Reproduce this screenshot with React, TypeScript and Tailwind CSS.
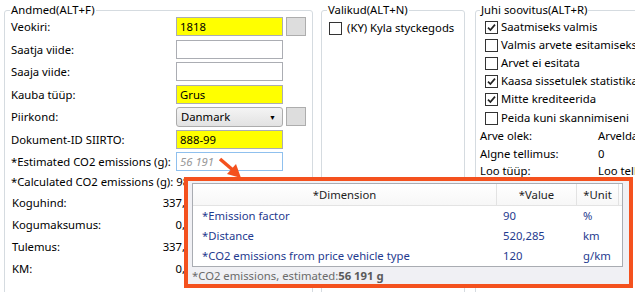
import type { ReactNode } from 'react'

const font = "font-['Noto_Sans',sans-serif]"

function Check({ checked }: { checked?: boolean }) {
  return (
    <span className="w-[13px] h-[13px] shrink-0 border border-[#333] bg-white flex items-center justify-center">
      {checked && (
        <svg width="9" height="9" viewBox="0 0 9 9">
          <path d="M1 4.6 L3.4 7 L8 1.6" fill="none" stroke="#222" strokeWidth="1.7" />
        </svg>
      )}
    </span>
  )
}

function Row({ label, children }: { label: string; children?: ReactNode }) {
  return (
    <div className="flex items-start h-[22.5px]">
      <span className="w-[165px] leading-[19px] whitespace-nowrap">{label}</span>
      {children}
    </div>
  )
}

function Field({ value, yellow }: { value?: string; yellow?: boolean }) {
  return (
    <div
      className={
        'w-[107px] h-[19px] border border-[#abadb3] px-[3px] leading-[17px] ' +
        (yellow ? 'bg-[#ffff00]' : 'bg-white')
      }
    >
      {value}
    </div>
  )
}

function GrayBtn() {
  return <div className="w-[20px] h-[19px] ml-[3px] bg-[#dddddd] border border-[#adadad]" />
}

const totals = [
  { label: 'Koguhind:', value: '337,50' },
  { label: 'Kogumaksumus:', value: '0,00' },
  { label: 'Tulemus:', value: '337,50' },
  { label: 'KM:', value: '0,00' },
]

const flags = [
  { label: 'Saatmiseks valmis', checked: true },
  { label: 'Valmis arvete esitamiseks/kinnitamiseks', checked: false },
  { label: 'Arvet ei esitata', checked: false },
  { label: 'Kaasa sissetulek statistikasse', checked: true },
  { label: 'Mitte krediteerida', checked: true },
  { label: 'Peida kuni skannimiseni', checked: false },
]

const info = [
  { label: 'Arve olek:', value: 'Arveldamata' },
  { label: 'Algne tellimus:', value: '0' },
  { label: 'Loo tüüp:', value: 'Loo tellimus' },
]

const dims = [
  { name: '*Emission factor', value: '90', unit: '%' },
  { name: '*Distance', value: '520,285', unit: 'km' },
  { name: '*CO2 emissions from price vehicle type', value: '120', unit: 'g/km' },
]

export default function App() {
  return (
    <div className={`relative w-[635px] h-[292px] overflow-hidden bg-white text-[11.3px] text-black ${font}`}>
      <div className="flex pl-[4px]">
        {/* Andmed */}
        <fieldset className="mt-[2px] w-[309px] h-[330px] shrink-0 border border-[#d5dbe0] rounded-[3px] px-[6px]">
          <legend className="ml-[-1px] px-[1px] leading-[16px]">Andmed(ALT+F)</legend>
          <div className="-mt-[1px]">
            <Row label="Veokiri:">
              <Field value="1818" yellow />
              <GrayBtn />
            </Row>
            <Row label="Saatja viide:">
              <Field />
            </Row>
            <Row label="Saaja viide:">
              <Field />
            </Row>
            <Row label="Kauba tüüp:">
              <Field value="Grus" yellow />
            </Row>
            <Row label="Piirkond:">
              <div className="w-[107px] h-[20px] rounded-[3px] border border-[#acacac] bg-gradient-to-b from-[#f4f4f4] to-[#e2e2e2] pl-[4px] pr-[6px] flex items-center justify-between">
                <span>Danmark</span>
                <span className="text-[7px] leading-none">▼</span>
              </div>
              <GrayBtn />
            </Row>
            <Row label="Dokument-ID SIIRTO:">
              <Field value="888-99" yellow />
            </Row>
            <div className="flex items-start h-[20px]">
              <span className="w-[165px] leading-[19px] whitespace-nowrap">*Estimated CO2 emissions (g):</span>
              <div className="w-[107px] h-[19px] border border-[#8fc0ee] px-[3px] leading-[17px] italic text-[#999]">
                56 191
              </div>
            </div>
            <div className="h-[20px] leading-[20px] whitespace-nowrap">*Calculated CO2 emissions (g): 98 991</div>
            {totals.map((t) => (
              <div key={t.label} className="flex h-[22px] leading-[22px] pl-[1px]">
                <span className="w-[140px]">{t.label}</span>
                <span className="w-[46px] text-right">{t.value}</span>
              </div>
            ))}
          </div>
        </fieldset>

        {/* Valikud */}
        <fieldset className="mt-[2px] ml-[8px] w-[144px] h-[330px] shrink-0 border border-[#d5dbe0] rounded-[3px] pl-[7px]">
          <legend className="ml-[-2px] px-[1px] leading-[16px]">Valikud(ALT+N)</legend>
          <div className="flex items-center h-[18px] mt-[1px]">
            <Check />
            <span className="ml-[5px] whitespace-nowrap">(KY) Kyla styckegods</span>
          </div>
        </fieldset>

        {/* Juhi soovitus */}
        <fieldset className="mt-[2px] ml-[10px] w-[220px] h-[330px] shrink-0 border border-[#d5dbe0] rounded-[3px] pl-[4px]">
          <legend className="px-[1px] leading-[16px]">Juhi soovitus(ALT+R)</legend>
          {flags.map((f) => (
            <div key={f.label} className="flex items-center h-[18.2px] pl-[5px]">
              <Check checked={f.checked} />
              <span className="ml-[3px] whitespace-nowrap">{f.label}</span>
            </div>
          ))}
          {info.map((r) => (
            <div key={r.label} className="flex h-[17.5px] leading-[17.5px] whitespace-nowrap">
              <span className="w-[118px]">{r.label}</span>
              <span>{r.value}</span>
            </div>
          ))}
        </fieldset>
      </div>

      {/* arrow */}
      <svg className="absolute left-[212px] top-[150px]" width="34" height="32" viewBox="0 0 34 32">
        <line x1="8" y1="9" x2="22" y2="21" stroke="#f4511e" strokeWidth="3.5" />
        <polygon points="29,28 15,24 24,14" fill="#f4511e" />
      </svg>

      {/* popup */}
      <div className="absolute left-[184px] top-[177px] w-[449px] h-[111px] border-[4px] border-[#f4511e] bg-[#f0f0f4] pl-[4px] pt-[2px]">
        <div className="w-[431px] border border-[#a9acb2] bg-white">
          <div className="flex h-[22px] leading-[21px] border-b border-[#e3e3e3] bg-gradient-to-b from-white to-[#f7f7f7] text-[#1e1e1e]">
            <span className="w-[304px] text-center border-r border-[#e3e3e3]">*Dimension</span>
            <span className="w-[80px] text-center border-r border-[#e3e3e3]">*Value</span>
            <span className="w-[42px] text-center border-r border-[#e3e3e3]">*Unit</span>
          </div>
          {dims.map((d) => (
            <div key={d.name} className="flex h-[20px] leading-[20px] text-[#1f3b8f]">
              <span className="w-[304px] pl-[9px] whitespace-nowrap">{d.name}</span>
              <span className="w-[80px] pl-[6px]">{d.value}</span>
              <span className="w-[42px] pl-[6px]">{d.unit}</span>
            </div>
          ))}
        </div>
        <div className="leading-[18px] text-[#6a6a6a] whitespace-nowrap">
          *CO2 emissions, estimated:<b className="text-[#5a5a5a]">56 191 g</b>
        </div>
      </div>
    </div>
  )
}
